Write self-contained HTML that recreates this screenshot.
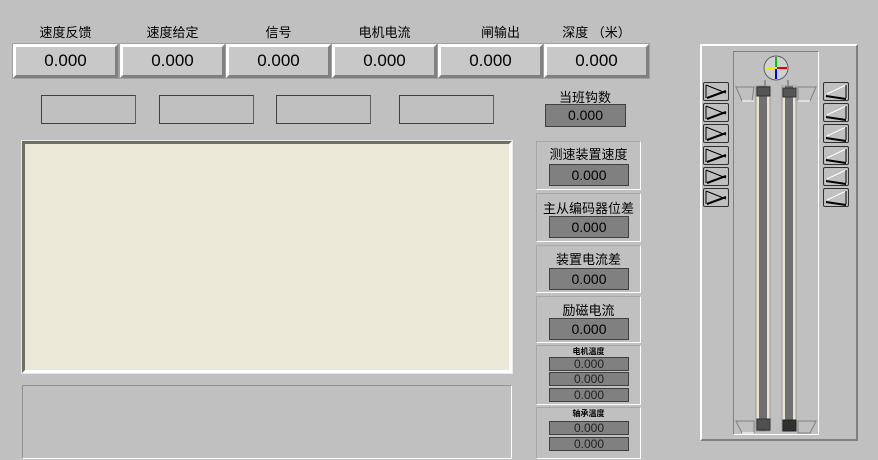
<!DOCTYPE html><html><head><meta charset="utf-8"><style>
body{margin:0;width:878px;height:460px;background:#c0c0c0;position:relative;overflow:hidden;font-family:"Liberation Sans","Noto Sans CJK SC",sans-serif;}
.a{position:absolute;box-sizing:border-box}
.lbl{position:absolute;font-size:13px;color:#000;text-align:center}
.btn{position:absolute;box-sizing:border-box;height:34px;top:44px;background:#c8c8c8;border-top:3px solid #fff;border-left:3px solid #fff;border-right:3px solid #808080;border-bottom:3px solid #808080;font-size:17px;text-align:center;line-height:28px;outline:1px solid #a0a0a0}
.eb{position:absolute;top:95px;height:29px;width:95px;border:1px solid #404040;border-right-color:#606060;box-sizing:border-box}
.grp{position:absolute;left:536px;width:105px;border:1px solid #a8a8a8;border-right-color:#fff;border-bottom-color:#fff;box-sizing:border-box}
.dv{position:absolute;left:12px;width:80px;height:22px;background:#808080;border:1px solid #404040;box-sizing:border-box;font-size:14px;text-align:center;line-height:20px}
.sv{position:absolute;left:12px;width:80px;height:14px;background:#808080;border:1px solid #404040;box-sizing:border-box;font-size:12px;text-align:center;line-height:12px;color:#222}
.lb{position:absolute;left:703px;width:26px;height:19px;border:1px solid #303030;border-radius:2px;box-sizing:border-box;background:#c0c0c0}
.rb{position:absolute;left:823px;width:26px;height:19px;border:1px solid #303030;border-radius:2px;box-sizing:border-box;background:#c0c0c0}
</style></head><body>
<div class="lbl" style="left:13px;width:105px;top:22px">速度反馈</div>
<div class="lbl" style="left:120px;width:105px;top:22px">速度给定</div>
<div class="lbl" style="left:226px;width:105px;top:22px">信号</div>
<div class="lbl" style="left:332px;width:105px;top:22px">电机电流</div>
<div class="lbl" style="left:448px;width:105px;top:22px">闸输出</div>
<div class="lbl" style="left:544px;width:105px;top:22px">深度 （米）</div>
<div class="btn" style="left:13px;width:105px">0.000</div>
<div class="btn" style="left:120px;width:105px">0.000</div>
<div class="btn" style="left:226px;width:105px">0.000</div>
<div class="btn" style="left:332px;width:105px">0.000</div>
<div class="btn" style="left:438px;width:105px">0.000</div>
<div class="btn" style="left:544px;width:105px">0.000</div>
<div class="eb" style="left:41px"></div><div class="eb" style="left:159px"></div><div class="eb" style="left:276px"></div><div class="eb" style="left:399px"></div>
<div class="lbl" style="left:545px;width:80px;top:87px">当班钩数</div>
<div class="a" style="left:545px;top:104px;width:81px;height:23px;background:#808080;border:1px solid #404040;font-size:14px;text-align:center;line-height:21px">0.000</div>
<div class="a" style="left:22px;top:141px;width:490px;height:232px;background:#ebe8d8;border:3px solid;border-color:#707060 #fff #fff #707060;outline:1px solid #e8e8e8"></div>
<div class="a" style="left:22px;top:385px;width:490px;height:74px;border:1px solid;border-color:#909090 #fff #fff #909090"></div>
<div class="grp" style="top:141px;height:49px"><div class="lbl" style="left:0;width:103px;top:2px">测速装置速度</div><div class="dv" style="top:22px">0.000</div></div>
<div class="grp" style="top:193px;height:49px"><div class="lbl" style="left:0;width:103px;top:4px">主从编码器位差</div><div class="dv" style="top:22px">0.000</div></div>
<div class="grp" style="top:245px;height:48px"><div class="lbl" style="left:0;width:103px;top:3px">装置电流差</div><div class="dv" style="top:22px">0.000</div></div>
<div class="grp" style="top:296px;height:47px"><div class="lbl" style="left:0;width:103px;top:3px">励磁电流</div><div class="dv" style="top:21px">0.000</div></div>
<div class="grp" style="top:345px;height:60px"><div class="lbl" style="left:0;width:103px;top:0;font-size:8px;font-weight:bold">电机温度</div><div class="sv" style="top:11px">0.000</div><div class="sv" style="top:26px">0.000</div><div class="sv" style="top:42px">0.000</div></div>
<div class="grp" style="top:407px;height:52px"><div class="lbl" style="left:0;width:103px;top:0;font-size:8px;font-weight:bold">轴承温度</div><div class="sv" style="top:13px">0.000</div><div class="sv" style="top:29px">0.000</div></div>
<div class="a" style="left:700px;top:44px;width:158px;height:397px;border:2px solid;border-color:#fff #808080 #808080 #fff"></div>
<div class="a" style="left:733px;top:51px;width:86px;height:384px;border:1px solid;border-color:#808080 #fff #fff #808080"></div>
<svg class="a" style="left:0;top:0" width="878" height="460">
<circle cx="776" cy="68" r="12" fill="#d0d0d0" stroke="#606060"/>
<line x1="776" y1="57" x2="776" y2="67" stroke="#0c0" stroke-width="2"/>
<line x1="777" y1="68" x2="787" y2="68" stroke="#e00" stroke-width="2"/>
<line x1="776" y1="69" x2="776" y2="79" stroke="#00e" stroke-width="2"/>
<line x1="765" y1="68" x2="775" y2="68" stroke="#ee0" stroke-width="2"/>
<line x1="765" y1="80" x2="765" y2="86" stroke="#606060"/><line x1="788" y1="80" x2="788" y2="86" stroke="#606060"/>
<path d="M736 87H754L752 101H742Z" fill="none" stroke="#808080"/><path d="M742 101H754" stroke="#fff"/>
<path d="M798 87H816L810 101H798Z" fill="none" stroke="#808080"/><path d="M798 101H810" stroke="#fff"/>
<path d="M736 421H754V433H742Z" fill="none" stroke="#808080"/><path d="M742 433H754" stroke="#fff"/>
<path d="M798 421H816L810 433H798Z" fill="none" stroke="#808080"/>
<rect x="756" y="86" width="14" height="345" fill="#e8e4d0" stroke="#999"/>
<rect x="759" y="86" width="8" height="345" fill="#707070"/>
<rect x="782" y="86" width="14" height="345" fill="#e8e4d0" stroke="#999"/>
<rect x="785" y="86" width="8" height="345" fill="#707070"/>
<rect x="757" y="87" width="13" height="9" fill="#555" stroke="#333"/>
<rect x="783" y="88" width="13" height="9" fill="#555" stroke="#333"/>
<rect x="757" y="419" width="13" height="11" fill="#505050" stroke="#333"/>
<rect x="783" y="420" width="13" height="11" fill="#303030" stroke="#222"/>
</svg>
<div class="lb" style="top:82px"></div><div class="lb" style="top:103px"></div><div class="lb" style="top:124px"></div><div class="lb" style="top:146px"></div><div class="lb" style="top:167px"></div><div class="lb" style="top:188px"></div>
<div class="rb" style="top:82px"></div><div class="rb" style="top:103px"></div><div class="rb" style="top:124px"></div><div class="rb" style="top:146px"></div><div class="rb" style="top:167px"></div><div class="rb" style="top:188px"></div>
<svg class="a" style="left:0;top:0" width="878" height="460">
<g fill="none">
<g id="l"><path d="M706 85V98" stroke="#000"/><path d="M706 85L726 93" stroke="#000"/><path d="M707 98L726 91" stroke="#000" stroke-width="2"/></g>
<use href="#l" y="21"/><use href="#l" y="42"/><use href="#l" y="64"/><use href="#l" y="85"/><use href="#l" y="106"/>
<g id="r"><path d="M846 85L827 94" stroke="#fff"/><path d="M846 85V98" stroke="#000"/><path d="M826 96L846 99" stroke="#000" stroke-width="2"/></g>
<use href="#r" y="21"/><use href="#r" y="42"/><use href="#r" y="64"/><use href="#r" y="85"/><use href="#r" y="106"/>
</g></svg>
</body></html>
